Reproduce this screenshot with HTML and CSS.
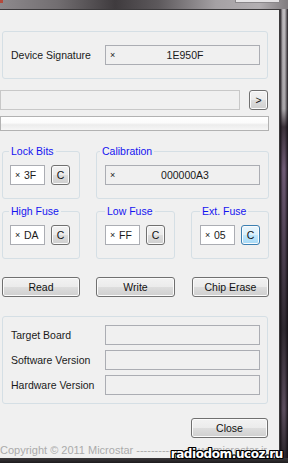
FILE: index.html
```html
<!DOCTYPE html>
<html lang="en">
<head>
  <meta charset="UTF-8" />
  <title>AVR Programmer</title>
  <meta name="viewport" content="width=device-width, initial-scale=1.0" />
  <link rel="stylesheet" href="styles.css">
</head>
<body>

<div class="titlebar">
  <div class="title-icon"></div>
  <div class="title-btn"></div>
</div>

<div class="frame">
  <div class="client">

    <div class="group sig">
      <span class="label">Device Signature</span>
      <div class="field wide ro"><span class="x">×</span><span class="val">1E950F</span></div>
    </div>

    <div class="path-row">
      <div class="field path"></div>
      <button class="button small">&gt;</button>
    </div>

    <div class="progress"></div>

    <div class="grid fuses">
      <fieldset class="box">
        <legend>Lock Bits</legend>
        <div class="field short"><span class="x">×</span>3F</div>
        <button class="button small">C</button>
      </fieldset>
      <fieldset class="box span2">
        <legend>Calibration</legend>
        <div class="field wide ro"><span class="x">×</span><span class="val">000000A3</span></div>
      </fieldset>
      <fieldset class="box">
        <legend>High Fuse</legend>
        <div class="field short"><span class="x">×</span>DA</div>
        <button class="button small">C</button>
      </fieldset>
      <fieldset class="box mid">
        <legend>Low Fuse</legend>
        <div class="field short"><span class="x">×</span>FF</div>
        <button class="button small">C</button>
      </fieldset>
      <fieldset class="box mid">
        <legend>Ext. Fuse</legend>
        <div class="field short"><span class="x">×</span>05</div>
        <button class="button small hot">C</button>
      </fieldset>
    </div>

    <div class="grid actions">
      <button class="button">Read</button>
      <button class="button">Write</button>
      <button class="button">Chip Erase</button>
    </div>

    <div class="group info">
      <div class="info-row">
        <span class="label">Target Board</span>
        <div class="field wide ro"></div>
      </div>
      <div class="info-row">
        <span class="label">Software Version</span>
        <div class="field wide ro"></div>
      </div>
      <div class="info-row">
        <span class="label">Hardware Version</span>
        <div class="field wide ro"></div>
      </div>
    </div>

    <div class="close-row">
      <button class="button">Close</button>
    </div>

    <div class="copyright">Copyright © 2011 Microstar ------------- www.microstar.ir</div>
  </div>
  <div class="side"></div>
</div>

<div class="bottom"></div>

<div class="watermark">radiodom.ucoz.ru</div>

</body>
</html>
```

FILE: styles.css
```css
body {
  margin: 0;
  padding: 0;
  width: 288px;
  height: 463px;
  overflow: hidden;
  position: relative;
  background: #2a2629;
  font-family: "Liberation Sans", Arial, sans-serif;
  font-size: 10.5px;
  color: #1a1a1a;
}

.titlebar {
  height: 9px;
  position: relative;
  background: linear-gradient(90deg, #8e8a8d 0%, #726e71 20%, #3f3b3e 40%, #5d595c 55%, #a5a1a4 75%, #b3afb2 90%, #807c7f 100%);
}

.title-icon {
  position: absolute;
  left: 0;
  top: 0;
  width: 3px;
  height: 3px;
  background: #b44a3c;
}

.title-btn {
  position: absolute;
  left: 235px;
  top: 0;
  width: 43px;
  height: 2px;
  background: #e6e4e6;
  border: 1px solid #8a878a;
  border-top: none;
}

.frame {
  display: flex;
  height: 449px;
}

.client {
  width: 280px;
  box-sizing: border-box;
  background: #f0f0f0;
  border-top: 1px solid #3c3a3c;
  border-right: 1px solid #3c3a3c;
  padding: 21px 11px 0 2px;
  display: flex;
  flex-direction: column;
}

.side {
  flex: 1;
  background:
    linear-gradient(90deg, rgba(20,15,20,0.9) 0%, rgba(0,0,0,0) 35%, rgba(0,0,0,0) 60%, rgba(20,15,20,0.9) 100%),
    linear-gradient(#bdb9bd 0px, #a8a4a8 100px, #3a3038 118px, #6e5a74 160px, #4c3f50 240px, #2e282f 320px, #5a4c5c 400px, #2a252a 449px);
}

.bottom {
  height: 5px;
  background: linear-gradient(#3a383a, #1e1c1e);
}

/* group boxes */

.group {
  border: 1px solid #d5dfe5;
  border-radius: 3px;
}

.sig {
  display: flex;
  align-items: center;
  padding: 13px 0 13px 8px;
}

.label {
  width: 94px;
  flex: none;
}

.field {
  box-sizing: border-box;
  height: 20px;
  border: 1px solid #abadb3;
  background: #fff;
  display: flex;
  align-items: center;
}

.field.ro {
  background: #f0f0f0;
}

.field.wide {
  width: 155px;
  padding-left: 4px;
}

.field.short {
  width: 35px;
  padding-left: 4px;
}

.x {
  font-size: 9px;
  width: 9px;
  flex: none;
}

.val {
  flex: 1;
  text-align: center;
  padding-right: 8px;
}

.path-row {
  display: flex;
  justify-content: space-between;
  margin: 11px 0 0 -2px;
}

.field.path {
  width: 240px;
  background: #f0f0f0;
  border-color: #c8c8c8;
}

.progress {
  height: 15px;
  box-sizing: border-box;
  margin: 6px -1px 0 -2px;
  border: 1px solid #b2b2b2;
  background: linear-gradient(#ffffff 0%, #fbfbfb 45%, #ececec 60%, #f6f6f6 100%);
}

/* buttons */

.button {
  box-sizing: border-box;
  height: 20px;
  padding: 0;
  font-family: inherit;
  font-size: 10.5px;
  color: #111;
  border: 1px solid #707070;
  border-radius: 3px;
  background: linear-gradient(#f2f2f2 0%, #ebebeb 50%, #dddddd 51%, #cfcfcf 100%);
  box-shadow: inset 0 0 0 1px #fbfbfb;
}

.button.small {
  width: 19px;
  flex: none;
}

.button.hot {
  border-color: #3c7fb1;
  background: linear-gradient(#eaf6fd 0%, #d9f0fc 50%, #bee6fd 51%, #a7d9f5 100%);
}

/* fuse grid */

.grid {
  display: grid;
  grid-template-columns: 78px 79px 78px;
  column-gap: 16px;
}

.fuses {
  margin-top: 14px;
  row-gap: 6px;
}

.box {
  margin: 0;
  min-width: 0;
  border: 1px solid #d5dfe5;
  border-radius: 3px;
  padding: 8px 0 13px 7px;
  display: flex;
  gap: 6px;
}

.box legend {
  color: #1515f0;
  line-height: 12px;
  padding: 0 2px;
  margin-left: -1px;
}

.box.span2 {
  grid-column: span 2;
  padding-left: 8px;
}

.box.span2 legend {
  margin-left: -5px;
}

.box.mid {
  padding-left: 8px;
}

.box.mid legend {
  margin-left: 0;
}

.actions {
  margin-top: 18px;
}

.actions .button:last-child {
  margin-left: 1px;
}

/* info group */

.info {
  margin-top: 19px;
  padding: 8px 0 8px 8px;
  display: flex;
  flex-direction: column;
  gap: 5px;
}

.info-row {
  display: flex;
  align-items: center;
}

.close-row {
  display: flex;
  justify-content: flex-end;
  margin-top: 14px;
}

.close-row .button {
  width: 77px;
}

.copyright {
  margin: 6px 0 0 -2px;
  font-size: 11px;
  line-height: 12px;
  color: #ababab;
  white-space: nowrap;
  overflow: hidden;
}

.watermark {
  position: absolute;
  right: 5px;
  bottom: 2px;
  font-family: "DejaVu Sans", sans-serif;
  font-weight: bold;
  font-size: 12px;
  letter-spacing: -0.4px;
  line-height: 14px;
  color: #fff;
  text-shadow: 1px 0 0 #000, -1px 0 0 #000, 0 1px 0 #000, 0 -1px 0 #000,
    1px 1px 0 #000, -1px -1px 0 #000, 1px -1px 0 #000, -1px 1px 0 #000;
}
```
